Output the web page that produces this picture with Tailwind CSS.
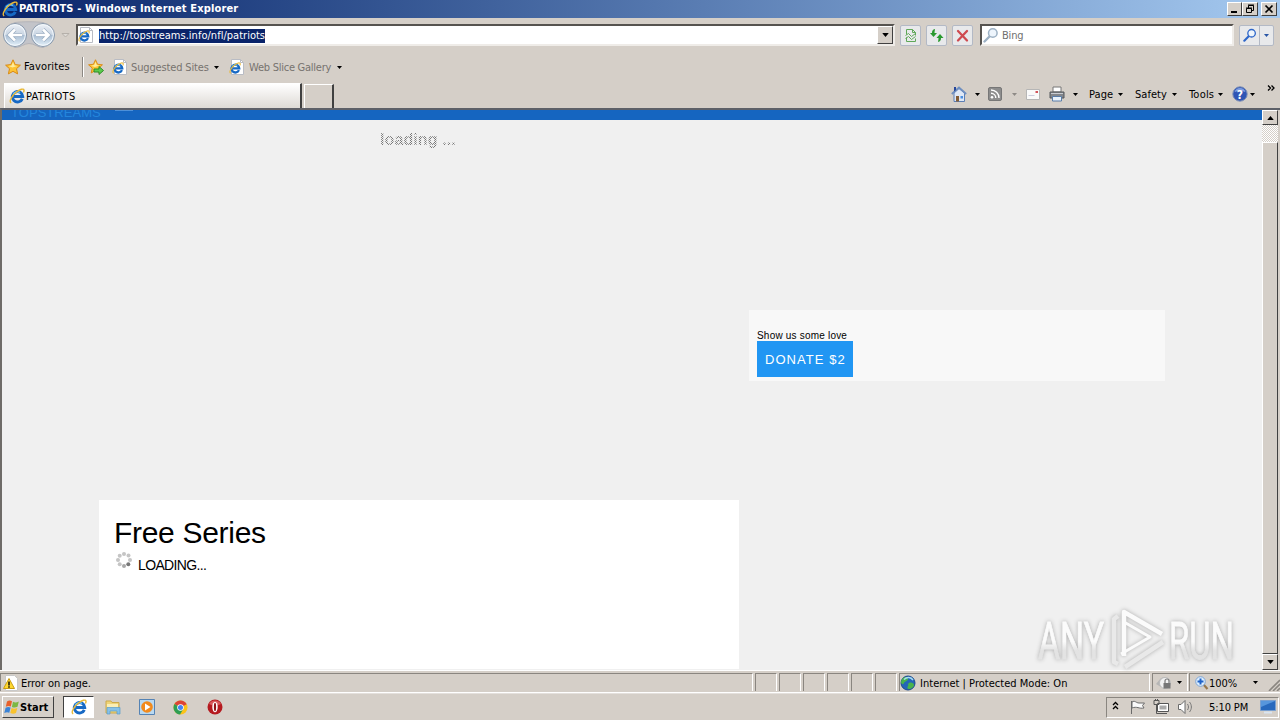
<!DOCTYPE html>
<html lang="en">
<head>
    <meta charset="UTF-8">
    <meta name="viewport" content="width=device-width, initial-scale=1.0">
    <title>PATRIOTS - Windows Internet Explorer</title>
    <script src="https://cdn.jsdelivr.net/npm/@tailwindcss/browser@4"></script>
</head>
<body class="w-[1280px] h-[720px] overflow-hidden flex flex-col bg-[#d5cfc8] text-black text-[11px] leading-[14px] whitespace-nowrap font-['DejaVu_Sans_Condensed','DejaVu_Sans',sans-serif]">

    <!-- shared icons -->
    <svg class="hidden">
        <symbol id="ie" viewBox="0 0 16 16">
            <path d="M13.300 10.800A5.200 5.200 0 1 1 13.700 8.500H5" fill="none" stroke="#1769c4" stroke-width="3"/>
            <path d="M4 6.500A5 5 0 0 1 11 4.500" fill="none" stroke="#6cc2f5" stroke-width="1.400"/>
            <path d="M2.200 15C-.5 13.500 3 7.500 7.500 4 11 1.200 14.600.2 15 2.200c.1.8-.2 1.600-.6 2.300" fill="none" stroke="#e9b938" stroke-width="1.400"/>
        </symbol>
        <symbol id="iepage" viewBox="0 0 16 16">
            <path d="M2.500.5h9l3 3v12h-12z" fill="#fff" stroke="#b9bcc4"/>
            <path d="M11.500.5v3h3" fill="none" stroke="#b9bcc4"/>
            <use href="#ie" x="0" y="3" width="12" height="12"/>
        </symbol>
        <symbol id="star" viewBox="0 0 16 16">
            <path d="M8 .8l2.200 4.800 5.200.6-3.900 3.500 1.100 5.200L8 12.300l-4.600 2.600 1.100-5.200L.6 6.200l5.200-.6z" fill="#fdc435" stroke="#d98a16" stroke-linejoin="round"/>
            <path d="M8 3l1.400 3.500 3 .4-5 1.600-4-1.400 3.200-.6z" fill="#ffec9c"/>
        </symbol>
        <symbol id="down" viewBox="0 0 5 3"><path d="M0 0h5L2.500 3z" fill="currentColor"/></symbol>
        <symbol id="lens" viewBox="0 0 16 16">
            <path d="M6.500 9.500L1.500 14.500" stroke="currentColor" stroke-width="2.400" stroke-linecap="round"/>
            <circle cx="9.800" cy="6" r="4.300" fill="#eef5fc" stroke="currentColor" stroke-width="1.500"/>
        </symbol>
    </svg>

    <!-- title bar -->
    <div class="h-[18px] shrink-0 flex items-center bg-linear-to-r from-[#0a246a] to-[#a6caf0] pl-[2px] pr-[3px]">
        <svg class="w-4 h-4"><use href="#ie"/></svg>
        <span class="text-white font-bold ml-px tracking-[0.15px]">PATRIOTS - Windows Internet Explorer</span>
        <div class="ml-auto flex">
            <div class="w-[15px] h-[14px] bg-[#d5cfc8] border border-t-white border-l-white border-r-[#404040] border-b-[#404040]">
                <svg class="w-[13px] h-3"><path d="M3 8h6v2H3z"/></svg>
            </div>
            <div class="w-4 h-[14px] bg-[#d5cfc8] border border-t-white border-l-white border-r-[#404040] border-b-[#404040]">
                <svg class="w-[13px] h-3"><path d="M5.500 5V2.500h5v5H9M5 2h6M3.500 5.500h5v4h-5zM3 5h6" fill="none" stroke="#000"/></svg>
            </div>
            <div class="w-4 h-[14px] ml-[3px] bg-[#d5cfc8] border border-t-white border-l-white border-r-[#404040] border-b-[#404040]">
                <svg class="w-[13px] h-3"><path d="M3.500 2.500l7 7M10.500 2.500l-7 7" stroke="#000" stroke-width="1.700"/></svg>
            </div>
        </div>
    </div>

    <!-- navigation row -->
    <div class="h-[36px] shrink-0 flex items-center pl-[2px] pr-[6px] pb-[2px]">
        <svg class="w-[55px] h-[28px] shrink-0" viewBox="0 0 55 28">
            <defs>
                <linearGradient id="ball" x2="0" y2="1">
                    <stop offset="0" stop-color="#eef2f7"/><stop offset=".48" stop-color="#c9d5e3"/>
                    <stop offset=".52" stop-color="#a9bdd3"/><stop offset="1" stop-color="#e6f3fb"/>
                </linearGradient>
            </defs>
            <path d="M13 1.500C20 .5 34 .5 41 1.500a13 13 0 0 1 0 25c-5 0-9-4-14-4s-8 4-14 4a13 13 0 0 1 0-25z" fill="#c3c4c9" stroke="#b4b4b9"/>
            <circle cx="13" cy="14" r="11.500" fill="url(#ball)" stroke="#8a99ab"/>
            <circle cx="41" cy="14" r="11.500" fill="url(#ball)" stroke="#8a99ab"/>
            <circle cx="13" cy="14" r="10.300" fill="none" stroke="#f3f8fc"/>
            <circle cx="41" cy="14" r="10.300" fill="none" stroke="#f3f8fc"/>
            <path d="M20 14H7.500M13 8.500L7.500 14l5.500 5.500M34 14h12.500M41 8.500l5.500 5.500-5.500 5.500" fill="none" stroke="#9aadc2" stroke-width="4"/>
            <path d="M20 14H7.500M13 8.500L7.500 14l5.500 5.500M34 14h12.500M41 8.500l5.500 5.500-5.500 5.500" fill="none" stroke="#fff" stroke-width="2.700"/>
        </svg>
        <svg class="w-[9px] h-[5px] ml-[4px] shrink-0" viewBox="0 0 9 5"><path d="M1 .5h7L4.500 4z" fill="#dedbd6" stroke="#b5b0aa"/></svg>
        <div class="w-[819px] h-[22px] ml-[6px] flex items-center bg-white border-2 border-t-[#56534f] border-l-[#56534f] border-r-[#efece8] border-b-[#efece8]">
            <svg class="w-4 h-4"><use href="#iepage"/></svg>
            <span class="ml-[5px] mt-px bg-[#0a246a] text-white tracking-[0.02px]">http://topstreams.info/nfl/patriots</span>
            <div class="ml-auto w-4 h-[18px] flex items-center justify-center bg-[#d5cfc8] border border-t-white border-l-white border-r-[#404040] border-b-[#404040]">
                <svg class="w-[7px] h-1" viewBox="0 0 5 3"><use href="#down"/></svg>
            </div>
        </div>
        <div class="flex gap-[5px] ml-[5px]">
            <div class="w-[21px] h-[21px] border border-[#b3b9c5] bg-[#e8e9eb] rounded-xs">
                <svg class="w-[19px] h-[19px]" fill="none" stroke="#5fa858"><path d="M5.500 8.500v-5h6l3 3v3M11.500 3.500v3h3M5.500 11.500v4h9v-3M4.500 9.500l3-2 3 3 4-3M4.500 12.500l3-2 3 3 4-3"/></svg>
            </div>
            <div class="w-[21px] h-[21px] border border-[#b3b9c5] bg-[#e8e9eb] rounded-xs">
                <svg class="w-[19px] h-[19px]" fill="#2a9a2f"><path d="M8 3C5.500 3.500 5 5 5 7H3l3.500 4L10 7H7.500c0-2 .5-3 .5-4zM11 16c2.500-.5 3-2 3-4h2.500L13 8l-3.500 4h2c0 2-.5 3-.5 4z"/></svg>
            </div>
            <div class="w-[21px] h-[21px] border border-[#b3b9c5] bg-[#e8e9eb] rounded-xs">
                <svg class="w-[19px] h-[19px]"><path d="M5 5l9 9.500M14 5l-9 9.500" stroke="#cf4a50" stroke-width="2.300" stroke-linecap="round"/></svg>
            </div>
        </div>
        <div class="w-[254px] h-[22px] ml-[7px] flex items-center bg-white border-2 border-t-[#56534f] border-l-[#56534f] border-r-[#efece8] border-b-[#efece8] text-[#6f6f6f]">
            <svg class="w-4 h-4 ml-px text-[#9db1c4]"><use href="#lens"/></svg>
            <span class="ml-[3px] pt-[2px] tracking-[-0.2px]">Bing</span>
        </div>
        <div class="ml-auto flex h-[21px] w-[35px] border border-[#b3b9c5] bg-[#e8e9eb] rounded-xs">
            <div class="w-[20px] border-r border-[#b3b9c5] flex items-center justify-center"><svg class="w-[14px] h-[14px] text-[#2d66c9]" viewBox="0 0 16 16"><use href="#lens"/></svg></div>
            <div class="flex-1 flex items-center justify-center"><svg class="w-[5px] h-[3px] text-[#2855a5]"><use href="#down"/></svg></div>
        </div>
    </div>

    <!-- favorites bar -->
    <div class="h-[26px] shrink-0 flex items-center pl-[5px] text-[#77736f]">
        <svg class="w-4 h-4"><use href="#star"/></svg>
        <span class="ml-[3px] w-[47px] text-black tracking-[0.12px] pb-px">Favorites</span>
        <div class="ml-[11px] h-5 border-l border-[#8b8782] border-r border-r-white w-[2px]"></div>
        <svg class="w-4 h-4 ml-[4px]" viewBox="0 0 16 16"><use href="#star" width="15" height="15"/><path d="M6 10h5V7.500l4.500 4-4.500 4V13H6z" fill="#5ccb4d" stroke="#2f8d2a"/></svg>
        <svg class="w-4 h-4 ml-[8px]"><use href="#iepage"/></svg>
        <span class="ml-[3px] w-[79px] tracking-[-0.14px] pt-px">Suggested Sites</span>
        <svg class="w-[5px] h-[3px] ml-[4px] text-black"><use href="#down"/></svg>
        <svg class="w-4 h-4 ml-[10px]"><use href="#iepage"/></svg>
        <span class="ml-[4px] w-[84px] tracking-[-0.25px] pt-px">Web Slice Gallery</span>
        <svg class="w-[5px] h-[3px] ml-[4px] text-black"><use href="#down"/></svg>
    </div>

    <!-- tabs and command bar -->
    <div class="h-[28px] shrink-0 flex items-end">
        <div class="w-[298px] h-[25px] ml-[4px] flex items-center pl-[4px] border border-b-0 border-white border-r-2 border-r-[#404040] bg-linear-to-b from-white to-[#dedad5]">
            <svg class="w-4 h-4"><use href="#ie"/></svg>
            <span class="pl-px pt-[2px] tracking-[0.3px]">PATRIOTS</span>
        </div>
        <div class="w-[30px] h-6 ml-[2px] border border-b-0 border-white border-r-2 border-r-[#404040]"></div>
        <div class="ml-auto h-[28px] w-[329px] flex items-center">
            <svg class="w-4 h-4" viewBox="0 0 16 16"><path d="M3 7v8.500h10.500V7L8 2.500z" fill="#dfe8f6" stroke="#5d7fb5"/><path d="M.8 8L8 1.500 15.200 8" fill="none" stroke="#6f8fc0" stroke-width="1.800"/><path d="M3 1h2v3L3 5.500z" fill="#27479a"/><path d="M5 10h3v5.500H5z" fill="#835c35"/><path d="M9.500 10h2.500v2.500H9.500z" fill="#4b8fe0"/></svg>
            <svg class="w-[5px] h-[3px] ml-[8px]"><use href="#down"/></svg>
            <svg class="w-[14px] h-[14px] ml-[8px]" viewBox="0 0 14 14"><rect x=".5" y=".5" width="13" height="13" rx="1.500" fill="#8d8d8d" stroke="#777"/><circle cx="4" cy="10.300" r="1.300" fill="#fff"/><path d="M3 6.300a4.800 4.800 0 0 1 4.800 4.800M3 3a8 8 0 0 1 8 8" fill="none" stroke="#fff" stroke-width="1.400"/></svg>
            <svg class="w-[5px] h-[3px] ml-[10px] text-[#8e8a86]"><use href="#down"/></svg>
            <svg class="w-[14px] h-[11px] ml-[9px]" viewBox="0 0 14 11"><path d="M.5.5h13v10H.5z" fill="#fafafa" stroke="#b6b6b6"/><path d="M9.500 2h2.500v2H9.500z" fill="#d2535a"/><path d="M2.500 6.500h6" stroke="#ccd"/></svg>
            <svg class="w-4 h-4 ml-[9px]" viewBox="0 0 16 16"><path d="M4 1h8v5H4z" fill="#fff" stroke="#777"/><path d="M1 6h14v6H1z" fill="#83868b" stroke="#55585d"/><path d="M2 7.500h12" stroke="#c9ccd1"/><path d="M3.500 10.500h9V15h-9z" fill="#e8f2fb" stroke="#5a7da8"/></svg>
            <svg class="w-[5px] h-[3px] ml-[8px]"><use href="#down"/></svg>
            <span class="ml-[11px] w-[26px] pt-[2px] tracking-[0.1px]">Page</span>
            <svg class="w-[5px] h-[3px] ml-[3px]"><use href="#down"/></svg>
            <span class="ml-[12px] w-[32px] pt-[2px] tracking-[0.05px]">Safety</span>
            <svg class="w-[5px] h-[3px] ml-[5px]"><use href="#down"/></svg>
            <span class="ml-[12px] w-[26px] pt-[2px] tracking-[0.2px]">Tools</span>
            <svg class="w-[5px] h-[3px] ml-[3px]"><use href="#down"/></svg>
            <svg class="w-4 h-4 ml-[9px]" viewBox="0 0 16 16"><circle cx="8" cy="8" r="7.200" fill="#2f55b5" stroke="#7c8eb5"/><path d="M2.500 6a5.800 5.800 0 0 1 11 0c-3-1.500-8-1.500-11 0z" fill="#7f9ee0"/><text x="8" y="12.500" text-anchor="middle" font-size="12" font-weight="bold" fill="#fff">?</text></svg>
            <svg class="w-[5px] h-[3px] ml-[2px]"><use href="#down"/></svg>
            <svg class="w-[8px] h-[6px] ml-[12px] mb-[13px]"><path d="M1 .5L3.500 3 1 5.500M4.500.5L7 3 4.500 5.500" fill="none" stroke="#000" stroke-width="1.300"/></svg>
        </div>
    </div>

    <!-- page viewport -->
    <div class="h-[562px] shrink-0 flex border-t-2 border-l-2 border-t-[#5d6068] border-l-[#6e6b68] relative font-['Liberation_Sans',Arial,sans-serif]">
        <div class="flex-1 bg-[#f0f0f0] overflow-hidden">
            <div class="h-[10px] bg-[#1565c0] overflow-hidden flex">
                <span class="ml-[9px] -mt-[5px] text-[13px] leading-4 tracking-[0.05px] text-[#2485dc]">TOPSTREAMS</span>
                <span class="ml-[14px] w-[18px] h-px bg-[#4d90d9]"></span>
            </div>
            <div class="pl-[378px] pt-[11px] h-[35px] text-[16px] leading-[18px]"><span class="font-bold text-transparent tracking-[0.1px] bg-clip-text bg-[repeating-conic-gradient(#777_0_25%,#f0f0f0_0_50%)] bg-size-[2px_2px]">loading ...</span></div>
            <div class="flex h-[515px]">
                <div class="w-[640px] h-[169px] ml-[97px] mt-[345px] bg-white pl-[15px] pt-[16px]">
                    <h1 class="text-[30px] leading-[34px] tracking-[-0.3px]">Free Series</h1>
                    <div class="flex mt-px">
                        <svg class="w-[18px] h-[18px] ml-px" viewBox="0 0 18 18" fill="#c5c5c5"><circle cx="9" cy="3" r="2"/><circle cx="13.500" cy="4.500" r="2"/><circle cx="15" cy="9" r="2"/><circle cx="13.300" cy="13.300" r="2" fill="#777"/><circle cx="9" cy="15" r="2" fill="#a8a8a8"/><circle cx="4.700" cy="13.300" r="2"/><circle cx="3" cy="9" r="2"/><circle cx="4.700" cy="4.700" r="2"/></svg>
                        <span class="ml-[5px] mt-[6px] text-[14px] leading-4 tracking-[-0.65px]">LOADING...</span>
                    </div>
                </div>
                <div class="w-[416px] h-[71px] ml-[10px] mt-[155px] bg-[#f8f8f8] pl-[8px] pt-[20px]">
                    <div class="text-[10px] leading-[12px] h-[11px] tracking-[0.2px]">Show us some love</div>
                    <div class="w-24 h-9 bg-[#2196f3] text-white text-[13px] leading-[38px] pl-[8px] tracking-[1.05px]">DONATE $2</div>
                </div>
            </div>
        </div>
        <!-- scrollbar -->
        <div class="w-4 flex flex-col mr-[2px] bg-[repeating-conic-gradient(#fff_0_25%,#d5cfc8_0_50%)] bg-size-[2px_2px]">
            <div class="h-[15px] flex items-center justify-center bg-[#d5cfc8] border border-t-white border-l-white border-r-[#404040] border-b-[#404040]"><svg class="w-[7px] h-1 rotate-180" viewBox="0 0 5 3"><use href="#down"/></svg></div>
            <div class="mt-[17px] flex-1 bg-[#d5cfc8] border border-t-white border-l-white border-r-[#404040] border-b-[#404040]"></div>
            <div class="h-4 flex items-center justify-center bg-[#d5cfc8] border border-t-white border-l-white border-r-[#404040] border-b-[#404040]"><svg class="w-[7px] h-1" viewBox="0 0 5 3"><use href="#down"/></svg></div>
        </div>
        <!-- watermark -->
        <svg class="absolute left-[1030px] top-[495px] w-[210px] h-[70px] drop-shadow-[0_0_2px_#aaa]" viewBox="0 0 210 70">
            <defs>
                <linearGradient id="wm" x2="0" y2="1"><stop offset=".5" stop-color="#fbfbfb"/><stop offset=".65" stop-color="#e3e3e3"/></linearGradient>
            </defs>
            <g fill="url(#wm)" stroke="url(#wm)" stroke-width=".8" font-family="Roboto" font-size="52">
                <text x="6" y="54" textLength="66" lengthAdjust="spacingAndGlyphs">ANY</text>
                <text x="137" y="54" textLength="65" lengthAdjust="spacingAndGlyphs">RUN</text>
            </g>
            <g fill="none" stroke="#fbfbfb" stroke-width="4.500" stroke-linejoin="round">
                <path d="M92 51V7l38 22"/>
                <path d="M92 17l26 15-29 17" stroke-width="3"/>
                <path d="M86 11l-4 3v43l4 2M93 62l38-25" stroke="#e9e9e9"/>
            </g>
        </svg>
    </div>

    <!-- status bar -->
    <div class="h-[23px] shrink-0 flex items-center border-t border-b border-t-white border-b-white pt-px">
        <div class="w-[753px] h-[18px] flex items-center pl-[2px] border-t border-l border-[#8a8680] border-r border-r-white">
            <svg class="w-4 h-4" viewBox="0 0 16 16"><path d="M2.500.5h9l3 3v12h-12z" fill="#fff" stroke="#c9c9c9"/><path d="M6 3.500L11.500 13.500H.5z" fill="#ffd92f" stroke="#c99c12" stroke-linejoin="round"/><path d="M5.300 6.500h1.400v4H5.300zM5.300 11.300h1.400v1.400H5.300z"/></svg>
            <span class="ml-[2px] pt-[2px] tracking-[-0.05px]">Error on page.</span>
        </div>
        <div class="flex gap-[2px] ml-[2px]">
            <div class="w-[22px] h-[18px] border-t border-l border-[#8a8680] border-r border-r-white"></div>
            <div class="w-[22px] h-[18px] border-t border-l border-[#8a8680] border-r border-r-white"></div>
            <div class="w-[22px] h-[18px] border-t border-l border-[#8a8680] border-r border-r-white"></div>
            <div class="w-[22px] h-[18px] border-t border-l border-[#8a8680] border-r border-r-white"></div>
            <div class="w-[22px] h-[18px] border-t border-l border-[#8a8680] border-r border-r-white"></div>
            <div class="w-[22px] h-[18px] border-t border-l border-[#8a8680] border-r border-r-white"></div>
        </div>
        <div class="w-[251px] h-[18px] ml-[2px] flex items-center border-t border-l border-[#8a8680] border-r border-r-white">
            <svg class="w-4 h-4" viewBox="0 0 16 16"><circle cx="8" cy="8" r="7" fill="#2365b8" stroke="#1b4989"/><path d="M3 3c3-2 5-1 5 1s-3 2-4 4-2 1-3 0c0-2 1-4 2-5zM9 8c2-1 5 0 5 2s-3 4-5 4-2-2-1-3-1-2 1-3z" fill="#48b34b"/><path d="M4 4.500C7 1.500 11 2 13 5" fill="none" stroke="#a5dcf5" stroke-width="1.500"/></svg>
            <span class="ml-[4px] pt-[2px] tracking-[0.02px]">Internet | Protected Mode: On</span>
        </div>
        <div class="w-[36px] h-[18px] ml-[2px] flex items-center border-t border-l border-[#8a8680] border-r border-r-white">
            <svg class="w-[17px] h-[15px] ml-[2px]" viewBox="0 0 17 15"><path d="M1 9l5-6 4-1v7l-4 3z" fill="#b5b5b5"/><circle cx="10" cy="8" r="5.500" fill="#f1f1f1" stroke="#bbb"/><path d="M8.500 8h7v5.500h-7z" fill="#777"/><path d="M10 8V6a2 2 0 0 1 4 0v2" fill="none" stroke="#777" stroke-width="1.200"/></svg>
            <svg class="w-[5px] h-[3px] ml-[5px]"><use href="#down"/></svg>
        </div>
        <div class="h-[18px] ml-px flex-1 flex items-center border-t border-l border-[#8a8680]">
            <svg class="w-[14px] h-[14px] ml-[5px]" viewBox="0 0 14 14"><path d="M8.500 8.500l4 4.500" stroke="#98784c" stroke-width="2.200"/><circle cx="5.500" cy="5.500" r="4.800" fill="#dceefe" stroke="#7fa5d5"/><path d="M5.500 2.500v6M2.500 5.500h6" stroke="#1e62c8" stroke-width="2"/></svg>
            <span class="w-[30px] pt-[2px] tracking-[-0.05px]">100%</span>
            <svg class="w-[5px] h-[3px] ml-[14px]"><use href="#down"/></svg>
            <svg class="w-3 h-3 ml-auto mt-[5px]"><path d="M1 12L12 1M5 12l7-7M9 12l3-3" stroke="#8a8680" stroke-width="1.600"/></svg>
        </div>
    </div>

    <!-- taskbar -->
    <div class="flex-1 flex items-center pl-[2px] pr-px border-t border-[#e4e0dc]">
        <div class="w-[52px] h-[22px] flex items-center pl-px border border-t-white border-l-white border-r-[#404040] border-b-[#404040] font-bold">
            <svg class="w-4 h-4" viewBox="0 0 16 16"><path d="M3 2.500c2-1.300 3.500-1 5-.2L6.800 7.500c-1.600-.8-3-.8-5 .3z" fill="#e8602a"/><path d="M9 2.800c2 1 3.500.8 5.800-.2L13.500 7.800c-2 1-3.700 1-5.600.1z" fill="#7cb843"/><path d="M1.600 8.800c2-1 3.300-.9 5-.2l-1.300 5.200c-1.600-.8-3-.8-5 .2z" fill="#3b83d6"/><path d="M7.600 9c2 .9 3.500.8 5.700-.1L12 14.100c-2 1-3.700 1-5.700 0z" fill="#f9c22c"/></svg>
            <span class="tracking-[0.05px] pt-px">Start</span>
        </div>
        <div class="w-[31px] h-[22px] ml-[9px] flex items-center justify-center bg-white border border-t-[#404040] border-l-[#404040] border-white">
            <svg class="w-4 h-4"><use href="#ie"/></svg>
        </div>
        <svg class="w-4 h-4 ml-[11px]" viewBox="0 0 16 16"><path d="M1 2h5l1 1.500h7V14H1z" fill="#efd477" stroke="#cda94b"/><path d="M2 5h11v4H2z" fill="#fbeeb5"/><path d="M2 8.500h13V15h-3v-3H5v3H2z" fill="#86c1e8" stroke="#5a9cc8" stroke-width=".7"/></svg>
        <svg class="w-4 h-4 ml-[18px]" viewBox="0 0 16 16"><path d="M.5.5h15v15H.5z" fill="#b9d9f1" stroke="#5583b4"/><circle cx="8" cy="8" r="5.800" fill="#f28a1c"/><path d="M6 4.500l5.500 3.500L6 11.500z" fill="#fff"/></svg>
        <svg class="w-[15px] h-[15px] ml-[18px]" viewBox="0 0 16 16"><circle cx="8" cy="8" r="7.500" fill="#fbc318"/><path d="M8 8L1.500 4.300A7.500 7.500 0 0 1 14.500 4.300z" fill="#dc4437"/><path d="M8 8L1.500 4.300A7.500 7.500 0 0 0 7.500 15.500l3.500-6z" fill="#2f9e54"/><path d="M4 4.300h10.500L8 8z" fill="#dc4437"/><circle cx="8" cy="8" r="3.500" fill="#fff"/><circle cx="8" cy="8" r="2.700" fill="#4384f3"/></svg>
        <svg class="w-4 h-4 ml-[19px]" viewBox="0 0 16 16"><circle cx="8" cy="8" r="7.500" fill="#b51a1f"/><path d="M2 5a6.800 6.800 0 0 1 12 0c-4 2-8 2-12 0z" fill="#d9595c"/><ellipse cx="8" cy="8" rx="2.700" ry="5.200" fill="#fff"/><ellipse cx="8" cy="8" rx="1.100" ry="4.200" fill="#8f1216"/></svg>
        <div class="ml-auto w-[173px] h-[21px] flex items-center border-t border-l border-[#8a8680] border-r border-b border-r-white border-b-white">
            <svg class="w-[7px] h-[9px] ml-[5px] mb-[3px]"><path d="M1 4l2.500-2.500L6 4M1 8l2.500-2.500L6 8" fill="none" stroke="#000" stroke-width="1.300"/></svg>
            <svg class="w-[17px] h-4 ml-[10px]"><path d="M2.500 2v13M3 3c3-2 4 1 7 1h5.500l-2 2.500 1.500 2.500c-5 1-7-2-12 0z" fill="#fafafa" stroke="#6b6b6b"/></svg>
            <svg class="w-4 h-4 ml-[7px]"><path d="M4.500 4.500h11v8h-11z" fill="#fff" stroke="#555"/><path d="M6.500 6.500h7v4h-7z" fill="#a9a9a9"/><path d="M7 14.500h7M1 1.500h5v4H1zM3.500 5.500v9H9" fill="none" stroke="#555"/><path d="M2.500 0v2M4.500 0v2" stroke="#555"/></svg>
            <svg class="w-[17px] h-4 ml-[8px]"><path d="M1.500 5.500H4l4-4v13l-4-4H1.500z" fill="#fff" stroke="#6b6b6b"/><path d="M10.500 5c1.300 2 1.300 4 0 6M12.500 3c2.500 3 2.500 7 0 10" fill="none" stroke="#777"/></svg>
            <span class="ml-[15px] w-[40px] pt-px tracking-[-0.1px]">5:10 PM</span>
            <svg class="w-4 h-[14px] ml-[11px]" viewBox="0 0 16 14"><path d="M.5.5h15v10H.5z" fill="#2869bd" stroke="#7ba0cf"/><path d="M1 1h14L1 7z" fill="#5796dc"/><path d="M4 12.500h8" stroke="#d9e4f1" stroke-width="2"/></svg>
        </div>
    </div>
</body>
</html>
